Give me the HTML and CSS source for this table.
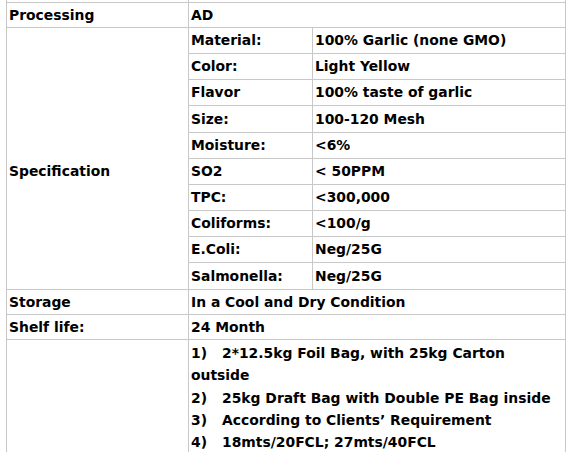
FILE: index.html
```html
<!DOCTYPE html>
<html>
<head>
<meta charset="utf-8">
<link rel="stylesheet" href="styles.css">
</head>
<body>
<table class="spec">
  <colgroup>
    <col class="c1"><col class="c2"><col class="c3">
  </colgroup>
  <tr class="cut"><td></td><td colspan="2"></td></tr>
  <tr class="row"><td>Processing</td><td colspan="2">AD</td></tr>
  <tr class="irow"><td rowspan="10" class="spec-label">Specification</td><td>Material:</td><td>100% Garlic (none GMO)</td></tr>
  <tr class="irow"><td>Color:</td><td>Light Yellow</td></tr>
  <tr class="irow"><td>Flavor</td><td>100% taste of garlic</td></tr>
  <tr class="irow tall"><td>Size:</td><td>100-120 Mesh</td></tr>
  <tr class="irow"><td>Moisture:</td><td>&lt;6%</td></tr>
  <tr class="irow"><td>SO2</td><td>&lt; 50PPM</td></tr>
  <tr class="irow"><td>TPC:</td><td>&lt;300,000</td></tr>
  <tr class="irow"><td>Coliforms:</td><td>&lt;100/g</td></tr>
  <tr class="irow"><td>E.Coli:</td><td>Neg/25G</td></tr>
  <tr class="irow tall"><td>Salmonella:</td><td>Neg/25G</td></tr>
  <tr class="row"><td>Storage</td><td colspan="2">In a Cool and Dry Condition</td></tr>
  <tr class="row"><td>Shelf life:</td><td colspan="2">24 Month</td></tr>
  <tr class="pack"><td></td><td colspan="2">
    <div><span class="num">1)</span>2*12.5kg Foil Bag, with 25kg Carton outside</div>
    <div><span class="num">2)</span>25kg Draft Bag with Double PE Bag inside</div>
    <div><span class="num">3)</span>According to Clients’ Requirement</div>
    <div><span class="num">4)</span>18mts/20FCL; 27mts/40FCL</div>
  </td></tr>
</table>
</body>
</html>
```
FILE: styles.css
```css
html, body {
  margin: 0;
  padding: 0;
  background: #fff;
}
body {
  font-family: "DejaVu Sans", Verdana, sans-serif;
  font-weight: bold;
  font-size: 13.9px;
  color: #000;
}
.spec {
  border-collapse: collapse;
  table-layout: fixed;
  width: 559px;
  margin-left: 6px;
  border-top: none;
}
.c1 { width: 182px; }
.c2 { width: 124px; }
.c3 { width: 253px; }
.spec td {
  border: 1px solid #c8c8c8;
  padding: 0 2px 0 2px;
  vertical-align: middle;
  white-space: nowrap;
}
.spec .cut td {
  border-top: none;
  height: 2px;
  padding: 0;
  line-height: 0;
}
.spec .row td {
  line-height: 24px;
}
.spec .irow td {
  line-height: 25px;
}
.spec .irow.tall td {
  line-height: 26px;
}
.spec .irow td.spec-label {
  line-height: 16px;
  padding-top: 24px;
  vertical-align: middle;
}
.spec .pack td {
  vertical-align: top;
  white-space: normal;
  line-height: 22.25px;
  padding-top: 2px;
  padding-bottom: 4px;
}
.num {
  margin-right: 15px;
}
```
